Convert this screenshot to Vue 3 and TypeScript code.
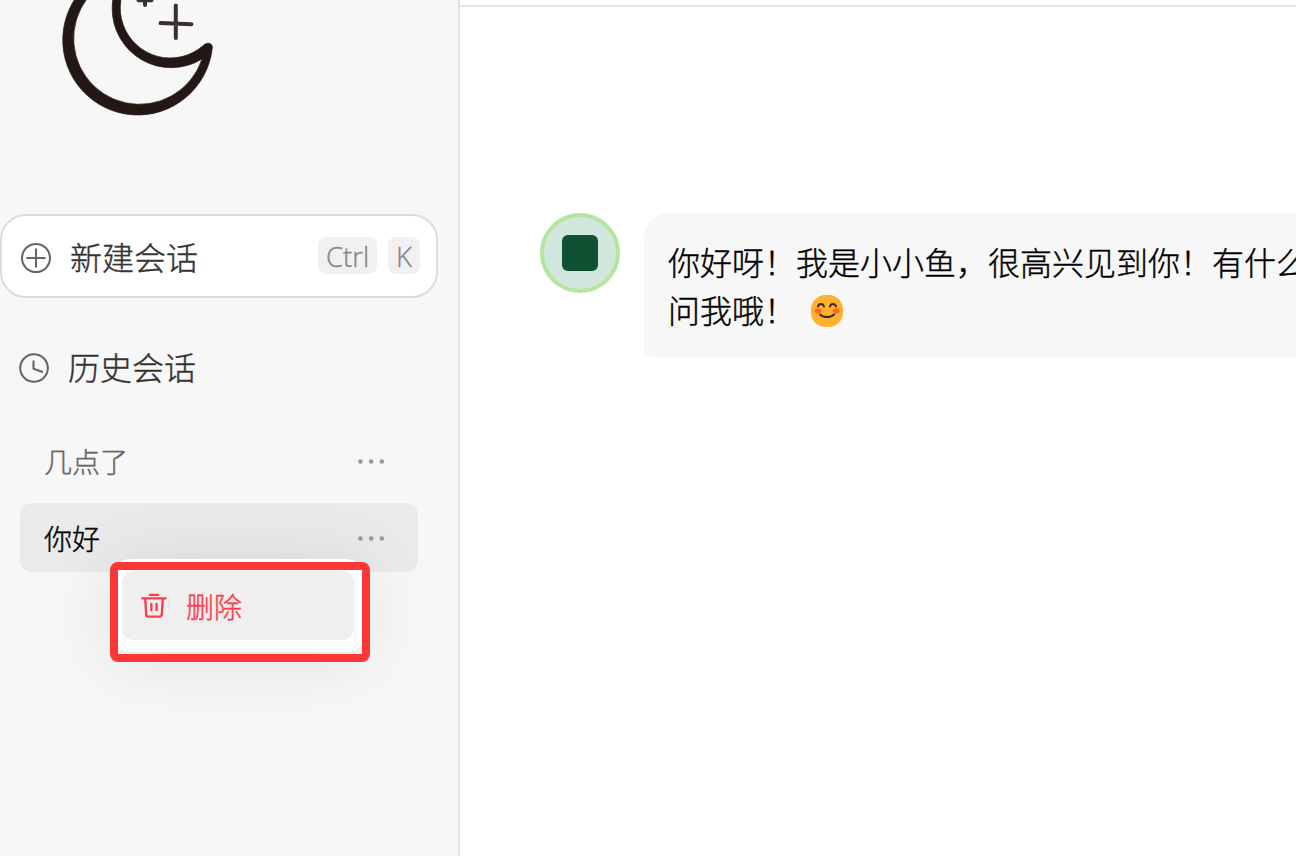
<script setup lang="ts">
interface Session {
  id: number
  title: string
  active: boolean
}

const keys: string[] = ['Ctrl', 'K']
const sessions: Session[] = [
  { id: 1, title: '几点了', active: false },
  { id: 2, title: '你好', active: true },
]
</script>

<template>
  <div class="app">
    <aside class="sidebar">
      <div class="logo">
        <svg width="160" height="120" viewBox="60 0 160 120">
          <path
            fill="#231815"
            stroke="#231815"
            stroke-width=".7"
            fill-rule="evenodd"
            d="M138 -35 A75 75 0 1 0 212.3 48 C213 43 207 41.500 203.300 45.500 A50 50 0 1 1 171.500 -42 Z M140 -27.300 A65.800 65.800 0 1 0 202 59 A59 59 0 0 1 112.200 8 A59 59 0 0 1 140 -42 Z"
          />
          <path
            d="M175.8 5.5V38M160.6 23.1L191.4 24.2M145 -6V5M138.5 .2H151.5"
            fill="none"
            stroke="#3a302e"
            stroke-width="4"
            stroke-linecap="round"
          />
        </svg>
      </div>
      <button class="new-chat">
        <svg class="icon" width="32" height="32" viewBox="0 0 32 32">
          <circle cx="16" cy="16" r="14" />
          <path d="M16 7.2v17.6M7.2 16h17.6" />
        </svg>
        <span class="label">新建会话</span>
        <span class="keys">
          <kbd v-for="k in keys" :key="k">{{ k }}</kbd>
        </span>
      </button>
      <div class="history">
        <svg class="icon" width="32" height="32" viewBox="0 0 32 32">
          <circle cx="16" cy="16" r="13.8" />
          <path d="M15.5 9.2v7.6l8.5 3" />
        </svg>
        <span class="label">历史会话</span>
      </div>
      <ul class="sessions">
        <li v-for="s in sessions" :key="s.id" :class="{ active: s.active }">
          <span>{{ s.title }}</span>
          <svg class="more" width="28" height="8" viewBox="0 0 28 8">
            <circle cx="3.4" cy="4.5" r="2.3" />
            <circle cx="14.2" cy="4.5" r="2.3" />
            <circle cx="24.8" cy="4.5" r="2.3" />
          </svg>
        </li>
      </ul>
      <div class="menu">
        <div class="menu-item">
          <svg width="28" height="28" viewBox="0 0 28 28">
            <path d="M9.8 2.9h8.5M2.4 6.4h23.2M5.2 6.4l1 16.3a2.2 2.2 0 0 0 2.2 2h11.2a2.2 2.2 0 0 0 2.2-2l1-16.3M11.3 12v6.2M16.5 12v6.2" />
          </svg>
          <span>删除</span>
        </div>
      </div>
      <div class="highlight"></div>
    </aside>

    <main class="main">
      <header class="topbar"></header>
      <section class="message">
        <div class="avatar"><div class="core"></div></div>
        <div class="bubble">
          <div class="line">你好呀！我是小小鱼，很高兴见到你！有什么</div>
          <div class="line">
            <span>问我哦！</span>
            <svg class="smile" width="32" height="32" viewBox="0 0 32 32">
              <rect width="32" height="32" rx="14.5" fill="#ffb02e" />
              <ellipse cx="7" cy="16" rx="3.5" ry="2.4" fill="#ff6723" />
              <ellipse cx="25" cy="16" rx="3.5" ry="2.4" fill="#ff6723" />
              <path
                d="M7 11.5c.7-3.5 5.2-3.5 6 0M19 11.5c.7-3.5 5.2-3.5 6 0M9 19.5c3.5 3.4 10.5 3.4 14 0"
                fill="none"
                stroke="#402a32"
                stroke-width="2"
                stroke-linecap="round"
              />
            </svg>
          </div>
        </div>
      </section>
    </main>
  </div>
</template>

<style>
body {
  margin: 0;
  overflow: hidden;
}
</style>

<style scoped>
.app {
  display: flex;
  width: 1296px;
  height: 856px;
  overflow: hidden;
  background: #fff;
  font-family: 'Noto Sans CJK SC', sans-serif;
  font-weight: 300;
  -webkit-text-stroke: 0.4px currentColor;
}
.sidebar {
  position: relative;
  box-sizing: border-box;
  width: 460px;
  flex: none;
  background: #f7f7f7;
  border-right: 2px solid #e2e2e2;
}
.logo {
  height: 214px;
  padding-left: 60px;
}
.logo svg {
  display: block;
}
.new-chat {
  box-sizing: border-box;
  display: flex;
  align-items: center;
  width: 438px;
  height: 84px;
  padding: 0 16px 0 18px;
  border: 2px solid #dcdcdc;
  border-radius: 26px;
  background: #fff;
  font: inherit;
}
.icon {
  flex: none;
  fill: none;
  stroke: #666;
  stroke-width: 2.1;
  stroke-linecap: round;
  stroke-linejoin: round;
}
.new-chat .icon {
  margin-top: 4px;
}
.label {
  margin-left: 18px;
  font-size: 32px;
  line-height: 48px;
  color: #333;
}
.keys {
  display: flex;
  gap: 11px;
  margin-left: auto;
  padding-bottom: 1px;
}
kbd {
  height: 37px;
  padding: 0 8px;
  border-radius: 8px;
  background: #f1f1f1;
  color: #888;
  font: 300 27.4px/40px 'Open Sans', 'Noto Sans', sans-serif;
}
.history {
  display: flex;
  align-items: center;
  height: 48px;
  margin-top: 46px;
  padding-left: 18px;
}
.history .label {
  margin-bottom: 4px;
}
.sessions {
  display: flex;
  flex-direction: column;
  gap: 8px;
  margin: 34px 40px 0 20px;
  padding: 0;
  list-style: none;
}
.sessions li {
  display: flex;
  align-items: center;
  justify-content: space-between;
  height: 69px;
  padding: 0 33px 0 24px;
  border-radius: 12px;
  font-size: 28px;
  line-height: 42px;
  color: #666;
}
.sessions li.active {
  background: #eaeaea;
  color: #000;
}
.more {
  fill: #999;
}
.menu {
  position: absolute;
  left: 110px;
  top: 559px;
  width: 232px;
  padding: 12px;
  border-radius: 20px;
  background: #fff;
  box-shadow: 0 8px 72px rgba(0, 0, 0, 0.1);
}
.menu-item {
  display: flex;
  align-items: center;
  height: 69px;
  padding-left: 18px;
  border-radius: 12px;
  background: #efefef;
  font-size: 28px;
  line-height: 42px;
  color: #ff3b4b;
}
.menu-item svg {
  margin-right: 18px;
  fill: none;
  stroke: #ff3b4b;
  stroke-width: 2.3;
  stroke-linecap: round;
  stroke-linejoin: round;
}
.highlight {
  position: absolute;
  left: 110px;
  top: 562px;
  width: 244px;
  height: 84px;
  border: 8px solid #fc3737;
  border-radius: 8px;
}
.main {
  flex: 1;
  min-width: 0;
}
.topbar {
  height: 5px;
  border-bottom: 2px solid #e5e5e5;
}
.message {
  display: flex;
  align-items: flex-start;
  gap: 24px;
  margin: 206px 0 0 80px;
}
.avatar {
  box-sizing: border-box;
  display: grid;
  place-items: center;
  width: 80px;
  height: 80px;
  flex: none;
  border: 4px solid #b4e6a0;
  border-radius: 50%;
  background: #d1e7dd;
}
.core {
  width: 36px;
  height: 36px;
  margin-bottom: 1px;
  border-radius: 6px;
  background: #0f5132;
}
.bubble {
  flex: none;
  box-sizing: border-box;
  width: 700px;
  height: 144px;
  padding: 24px;
  border-radius: 24px 24px 8px 8px;
  background: #f7f7f7;
}
.line {
  display: flex;
  align-items: center;
  height: 48px;
  font-size: 32px;
  line-height: 48px;
  white-space: nowrap;
  color: #000;
}
.smile {
  margin: 4px 0 0 15px;
}
</style>
